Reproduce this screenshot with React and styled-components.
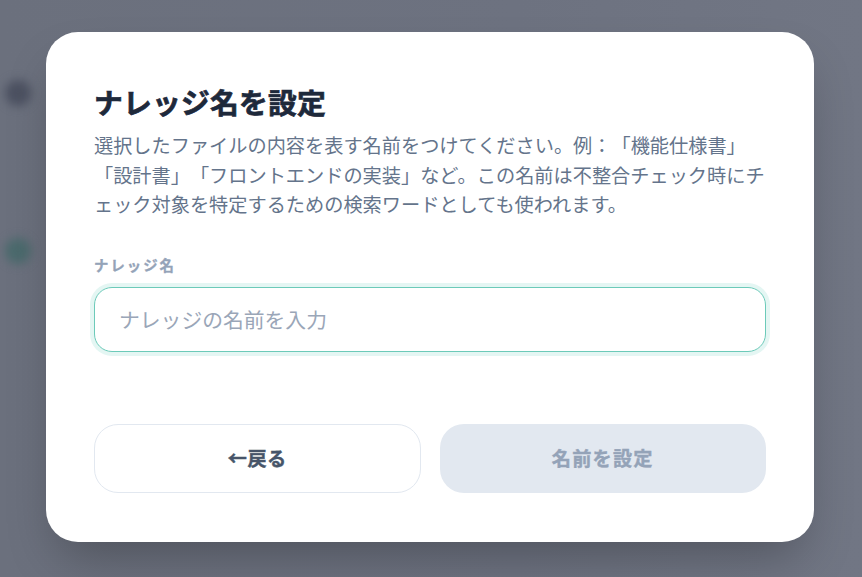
import React from "react";
import styled, { createGlobalStyle } from "styled-components";

const Global = createGlobalStyle`
  html, body { margin: 0; padding: 0; }
  body {
    font-family: "Noto Sans CJK JP", "Noto Sans", sans-serif;
    -webkit-font-smoothing: antialiased;
    text-spacing-trim: space-all;
  }
  * { box-sizing: border-box; }
`;

const Screen = styled.div`
  position: relative;
  width: 100vw;
  height: 100vh;
  overflow: hidden;
  background: linear-gradient(90deg, #6b707d 0%, #6d7280 60%, #717684 100%);
`;

const BlurredApp = styled.div`
  position: absolute;
  inset: 0;
  display: flex;
  filter: blur(5px);
`;

const Sidebar = styled.div`
  display: flex;
  flex-direction: column;
  gap: 132px;
  padding: 80px 0 0 5px;
`;

const Dot = styled.div`
  width: 26px;
  height: 26px;
  border-radius: 50%;
  background: ${(p) => p.$color};
`;

const Overlay = styled.div`
  position: absolute;
  inset: 0;
  display: flex;
  align-items: center;
  justify-content: center;
  padding-right: 2px;
  padding-bottom: 3px;
`;

const Dialog = styled.div`
  width: 768px;
  background: #ffffff;
  border-radius: 32px;
  padding: 48px 48px 49px;
  display: flex;
  flex-direction: column;
  box-shadow: 0 25px 50px -12px rgba(0, 0, 0, 0.28);
`;

const Title = styled.h2`
  margin: 0;
  font-size: 28.8px;
  line-height: 43px;
  font-weight: 700;
  letter-spacing: 0.2px;
  color: #1e293b;
  -webkit-text-stroke: 0.7px #1e293b;
`;

const Description = styled.p`
  margin: 8px 0 0;
  font-size: 19.2px;
  line-height: 29.5px;
  color: #64748b;
`;

const Field = styled.div`
  display: flex;
  flex-direction: column;
  gap: 12px;
  margin-top: 35px;
`;

const Label = styled.label`
  font-size: 14.4px;
  line-height: 20px;
  font-weight: 700;
  letter-spacing: 2px;
  color: #94a3b8;
  -webkit-text-stroke: 0.3px #94a3b8;
`;

const Input = styled.input`
  width: 100%;
  height: 65px;
  border: 1.5px solid #6ccab9;
  border-radius: 18px;
  padding: 0 24px;
  font-family: inherit;
  font-size: 20.8px;
  color: #1e293b;
  outline: none;
  box-shadow: 0 0 0 4px #e4f6f3;
  background: #fff;
  &::placeholder {
    color: #9aa6b8;
  }
`;

const Actions = styled.div`
  display: grid;
  grid-template-columns: 1fr 1fr;
  gap: 19px;
  margin-top: 72px;
`;

const Button = styled.button`
  height: 69px;
  border-radius: 24px;
  font-family: inherit;
  font-size: 19.2px;
  font-weight: 700;
  letter-spacing: ${(p) => (p.$primary ? "1.2px" : "0.5px")};
  display: flex;
  align-items: center;
  justify-content: center;
  border: ${(p) => (p.$primary ? "none" : "1px solid #e2e8f0")};
  background: ${(p) => (p.$primary ? "#e2e8f0" : "#ffffff")};
  color: ${(p) => (p.$primary ? "#94a3b8" : "#475569")};
  -webkit-text-stroke: 0.4px ${(p) => (p.$primary ? "#94a3b8" : "#475569")};
  cursor: ${(p) => (p.disabled ? "not-allowed" : "pointer")};
`;

export default function App() {
  return (
    <>
      <Global />
      <Screen>
        <BlurredApp>
          <Sidebar>
            <Dot $color="#4c5161" />
            <Dot $color="#4b6a6d" />
          </Sidebar>
        </BlurredApp>
        <Overlay>
          <Dialog>
            <Title>ナレッジ名を設定</Title>
            <Description>
              選択したファイルの内容を表す名前をつけてください。例：「機能仕様書」「設計書」「フロントエンドの実装」など。この名前は不整合チェック時にチェック対象を特定するための検索ワードとしても使われます。
            </Description>
            <Field>
              <Label htmlFor="knowledge-name">ナレッジ名</Label>
              <Input id="knowledge-name" placeholder="ナレッジの名前を入力" />
            </Field>
            <Actions>
              <Button>←戻る</Button>
              <Button $primary disabled>
                名前を設定
              </Button>
            </Actions>
          </Dialog>
        </Overlay>
      </Screen>
    </>
  );
}
